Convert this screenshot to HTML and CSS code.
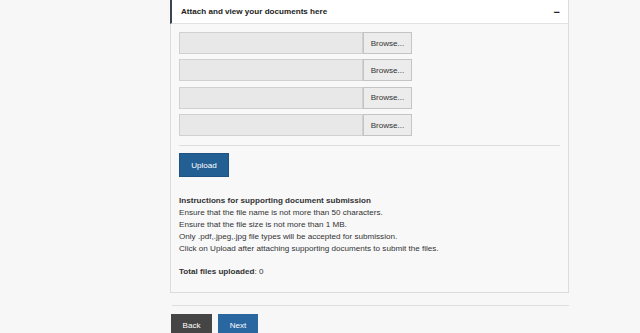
FILE: index.html
```html
<!DOCTYPE html>
<html lang="en">
<head>
    <meta charset="UTF-8">
    <title>Attach documents</title>
    <link rel="stylesheet" href="styles.css">
</head>
<body>

<div class="page">
    <div class="panel">
        <div class="panel-heading">
            <span>Attach and view your documents here</span>
            <span class="toggle">&minus;</span>
        </div>
        <div class="panel-body">
            <div class="file-row"><div class="file-name"></div><button class="browse">Browse...</button></div>
            <div class="file-row"><div class="file-name"></div><button class="browse">Browse...</button></div>
            <div class="file-row"><div class="file-name"></div><button class="browse">Browse...</button></div>
            <div class="file-row"><div class="file-name"></div><button class="browse">Browse...</button></div>

            <hr class="line">

            <button class="btn btn-upload">Upload</button>

            <div class="instructions">
                <b>Instructions for supporting document submission</b><br>
                Ensure that the file name is not more than 50 characters.<br>
                Ensure that the file size is not more than 1 MB.<br>
                Only .pdf,.jpeg,.jpg file types will be accepted for submission.<br>
                Click on Upload after attaching supporting documents to submit the files.
            </div>

            <p class="total"><b>Total files uploaded</b>: 0</p>
        </div>
    </div>

    <hr class="line outer">

    <div class="actions">
        <button class="btn btn-back">Back</button>
        <button class="btn btn-next">Next</button>
    </div>
</div>

</body>
</html>
```

FILE: styles.css
```css
body {
    font-family: "Liberation Sans", Arial, sans-serif;
    font-size: 8.1px;
    line-height: 12px;
    color: #333;
    margin: 0;
    padding: 0;
    background-color: #f7f7f8;
    overflow: hidden;
}
.page {
    width: 399px;
    margin-left: 170px;
}
.panel {
    background: #f8f8f9;
    border: 1px solid #dcdcdc;
    border-top: none;
}
.panel-heading {
    display: flex;
    justify-content: space-between;
    align-items: center;
    height: 23px;
    padding: 0 8px 0 9px;
    background: #fff;
    border-left: 2px solid #3a4650;
    border-bottom: 1px solid #e2e2e2;
    margin-left: -1px;
    font-weight: bold;
    color: #222;
}
.toggle {
    font-size: 11px;
    font-weight: bold;
}
.panel-body {
    padding: 8px 8px 14px 8px;
}
.file-row {
    display: flex;
    height: 22px;
    margin-bottom: 5.4px;
}
.file-name {
    width: 182px;
    background: #e8e8e8;
    border: 1px solid #d0d0d0;
}
.browse {
    width: 49px;
    margin: 0;
    padding: 0;
    background: #ececec;
    border: 1px solid #c4c4c4;
    font-family: inherit;
    font-size: 8.1px;
    color: #333;
}
.line {
    border: none;
    border-top: 1px solid #dedede;
    margin: 9px 0 7px 0;
}
.btn {
    font-family: inherit;
    font-size: 8.1px;
    color: #fff;
    border: none;
    padding: 0;
    cursor: pointer;
}
.btn-upload {
    width: 50px;
    height: 24px;
    background: #235f93;
    border: 1px solid #1d5282;
}
.instructions {
    margin-top: 18px;
}
.total {
    margin: 11px 0 0 0;
}
.outer {
    margin: 12px 0 8px 2px;
}
.actions {
    display: flex;
    gap: 6px;
    margin-left: 1px;
}
.btn-back {
    width: 41px;
    height: 22px;
    background: #454545;
}
.btn-next {
    width: 40px;
    height: 22px;
    background: #2a66a0;
}
```
